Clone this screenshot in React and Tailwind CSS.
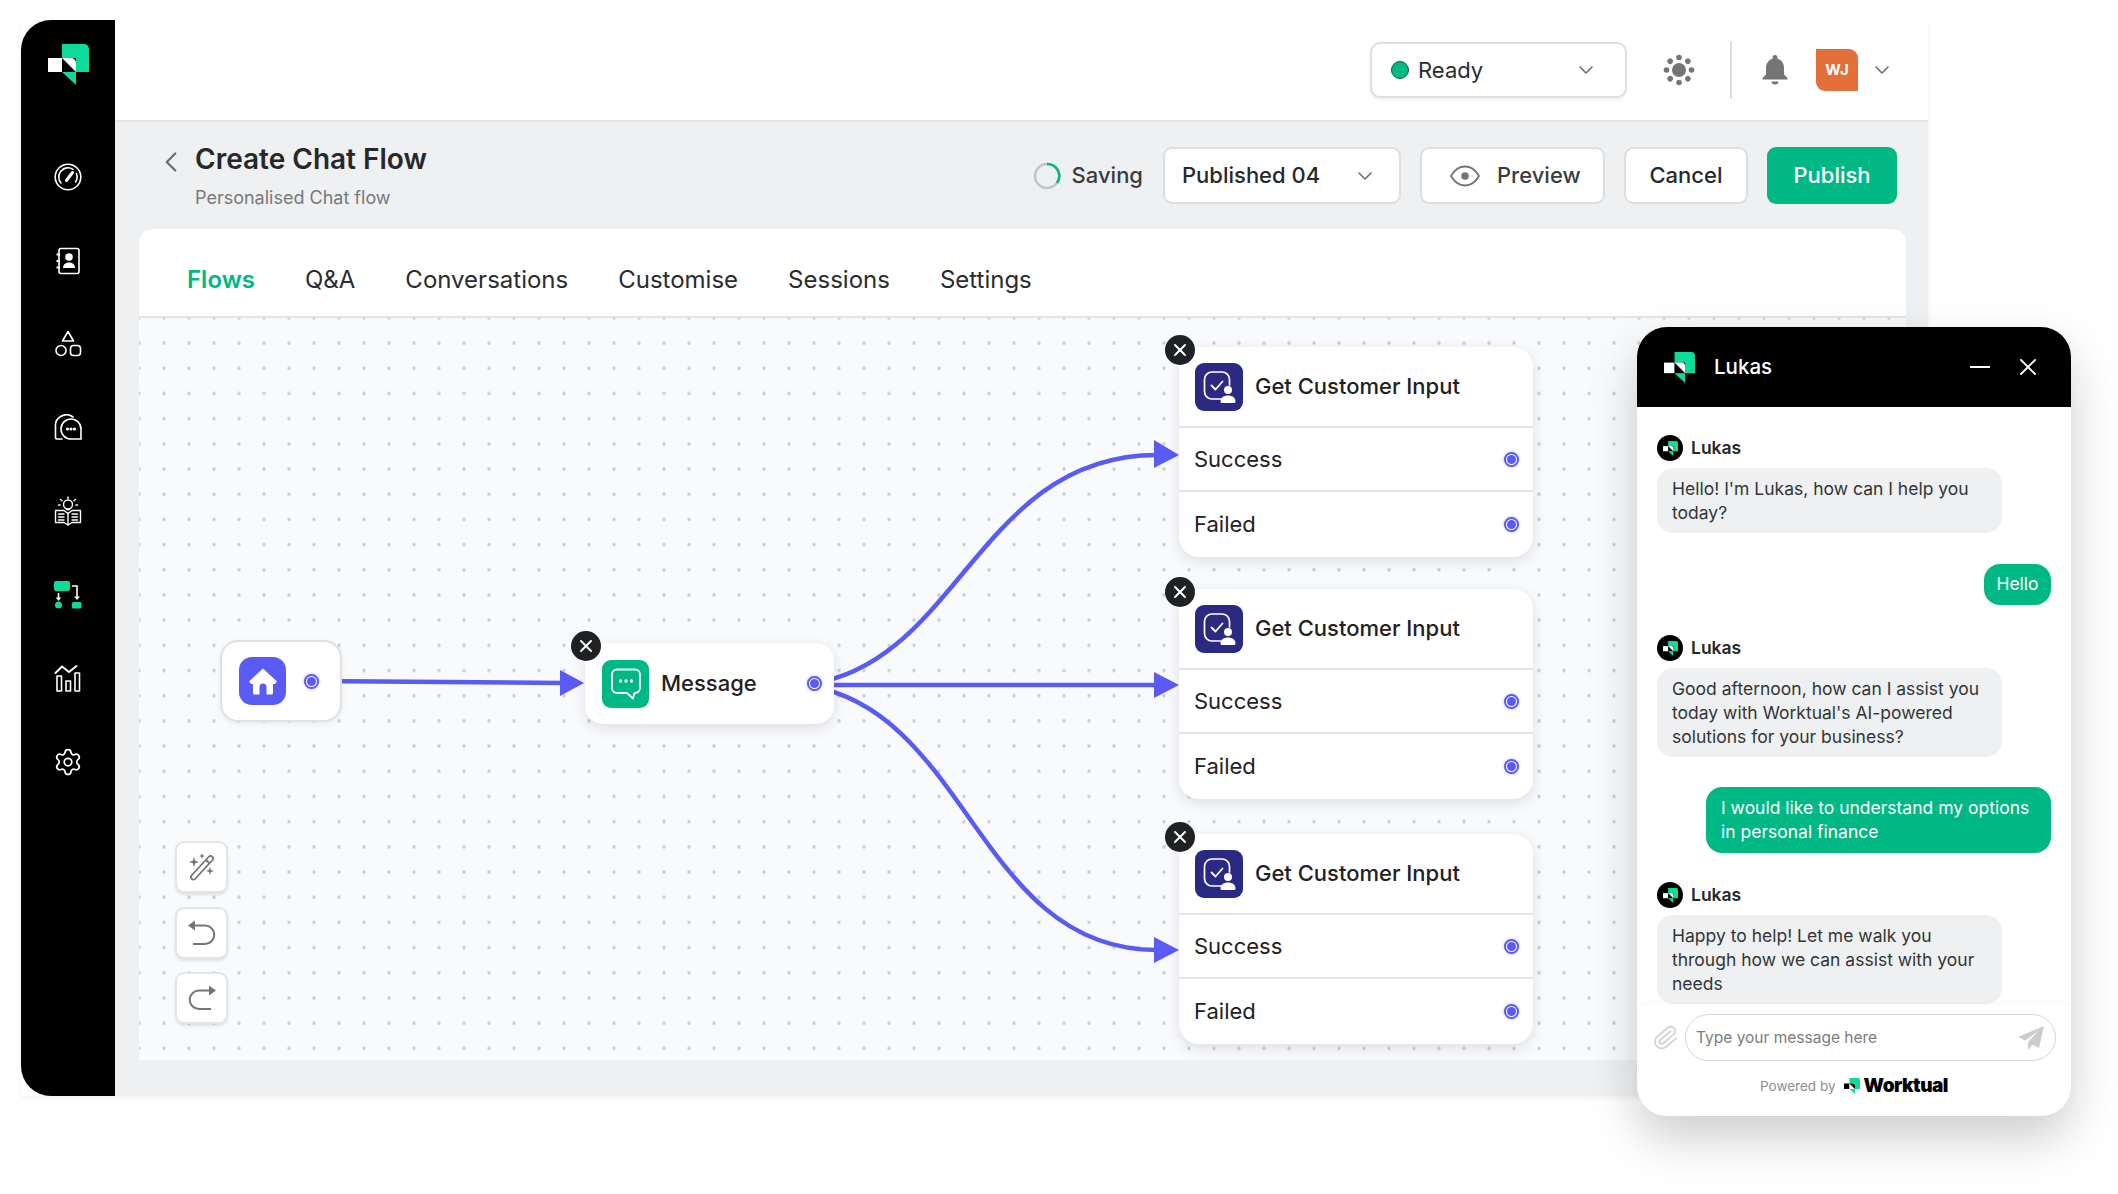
import React from "react";
import { ChevronDown, ChevronLeft, Paperclip, Settings, X } from "lucide-react";

const Logo = ({ size = 41, fg = "#ffffff", bg = "#000000", accent = "#0cdb9b" }) => (
	<svg width={size} height={size} viewBox="0 0 41 41">
		<path d="M14 0H36a5 5 0 0 1 5 5V28H14Z" fill={accent} />
		<rect x="0" y="14" width="14" height="14" fill={fg} />
		<rect x="14" y="14" width="14" height="14" fill={bg} />
		<path d="M14 14H23a5 5 0 0 1 5 5V28Z" fill={fg} />
		<path d="M14 28H28V41Z" fill={accent} />
	</svg>
);

const GaugeIcon = () => (
	<svg width="28" height="28" viewBox="0 0 28 28" fill="none" stroke="#fff" strokeWidth="1.6" strokeLinecap="round">
		<circle cx="14" cy="14" r="12.8" />
		<path d="M7 20A9.2 9.2 0 0 1 19 6.3" />
		<path d="M22.4 10.5A9.2 9.2 0 0 1 21.5 19" />
		<path d="M12.4 17.5L18.5 9.5" strokeWidth="3" />
	</svg>
);

const ContactIcon = () => (
	<svg width="28" height="28" viewBox="0 0 28 28" fill="none" stroke="#fff" strokeWidth="1.6">
		<rect x="5" y="1.5" width="20" height="25" rx="2" />
		<path d="M2.5 7.5H6M2.5 14H6M2.5 20.5H6" strokeWidth="2" />
		<circle cx="15" cy="10" r="3.8" fill="#fff" stroke="none" />
		<path d="M9 21c0-3.8 3-5.5 6-5.5s6 1.7 6 5.5z" fill="#fff" stroke="none" />
	</svg>
);

const ShapesIcon = () => (
	<svg width="28" height="28" viewBox="0 0 28 28" fill="none" stroke="#fff" strokeWidth="1.6" strokeLinejoin="round">
		<path d="M14 1.5L19.5 11H8.5Z" />
		<circle cx="7" cy="20.5" r="5" />
		<rect x="16.5" y="15.5" width="10" height="10" rx="3" />
	</svg>
);

const ChatsIcon = () => (
	<svg width="28" height="28" viewBox="0 0 28 28" fill="none" stroke="#fff" strokeWidth="1.6" strokeLinecap="round">
		<path d="M27 25V15A10 10 0 1 0 17 25Z" />
		<path d="M8 25H3a1.5 1.5 0 0 1-1.500-1.500V13A11 11 0 0 1 19 3" />
		<circle cx="13.500" cy="15" r="0.8" fill="#fff" />
		<circle cx="17" cy="15" r="0.8" fill="#fff" />
		<circle cx="20.500" cy="15" r="0.8" fill="#fff" />
	</svg>
);

const BookIcon = () => (
	<svg width="28" height="30" viewBox="0 0 28 30" fill="none" stroke="#fff" strokeWidth="1.4" strokeLinecap="round" strokeLinejoin="round">
		<circle cx="14" cy="8.500" r="4.500" />
		<path d="M12.500 13.500h3M14 1v1.500M6.500 3.500l1.500 1.200M21.500 3.500L20 4.700M4.500 9H6M22 9h1.500" />
		<path d="M14 17.500L10 14.500H1.500V26.500H10L14 29L18 26.500H26.500V14.500H18Z" />
		<path d="M14 17.500V29M4.500 18H10M4.500 21H10M4.500 24H10M18 18H23.500M18 21H23.500M18 24H23.500" />
	</svg>
);

const FlowIcon = () => (
	<svg width="28" height="28" viewBox="0 0 28 28" fill="none">
		<rect x="0" y="0" width="16" height="10" rx="2" fill="#0cdb9b" />
		<circle cx="4.500" cy="24" r="3.500" fill="#0cdb9b" />
		<rect x="18" y="21" width="9.500" height="6.500" rx="1.500" fill="#0cdb9b" />
		<path d="M4.500 12V18" stroke="#fff" strokeWidth="1.600" />
		<path d="M1.800 16.500L4.500 20L7.200 16.500Z" fill="#fff" />
		<path d="M18 5H23V17" stroke="#fff" strokeWidth="1.600" />
		<path d="M20 15.500L23 19L26 15.500Z" fill="#fff" />
	</svg>
);

const ChartIcon = () => (
	<svg width="28" height="28" viewBox="0 0 28 28" fill="none" stroke="#fff" strokeWidth="1.6" strokeLinecap="round" strokeLinejoin="round">
		<path d="M1.500 9L8 2.500L15 8L22.500 2" strokeWidth="1.900" />
		<rect x="3" y="12" width="4.500" height="15" />
		<rect x="12" y="17" width="4.500" height="10" />
		<rect x="21" y="9" width="4.500" height="18" />
	</svg>
);

const SunDots = () => (
	<svg width="32" height="32" viewBox="0 0 32 32" fill="#757575">
		<circle cx="16" cy="16" r="7" />
		{[0, 45, 90, 135, 180, 225, 270, 315].map((a) => (
			<circle key={a} cx="16" cy="3.500" r="2.800" transform={`rotate(${a} 16 16)`} />
		))}
	</svg>
);

const BellIcon = () => (
	<svg width="28" height="32" viewBox="0 0 28 32" fill="#757575">
		<path d="M14 1a2.500 2.500 0 0 0-2.500 2.500v1.200C7 6 5 10 5 14v6.500L1.500 24v1.500h25V24L23 20.500V14c0-4-2-8-6.500-9.300V3.500A2.500 2.500 0 0 0 14 1z" />
		<path d="M10.500 27.500a3.500 3 0 0 0 7 0z" />
	</svg>
);

const EyeIcon = () => (
	<svg width="30" height="22" viewBox="0 0 30 22" fill="none" stroke="#757575" strokeWidth="1.800">
		<path d="M1 11C5 4 10 1.500 15 1.500S25 4 29 11C25 18 20 20.500 15 20.500S5 18 1 11Z" />
		<circle cx="15" cy="11" r="3.800" fill="#757575" stroke="none" />
	</svg>
);

const HomeGlyph = () => (
	<svg width="30" height="30" viewBox="0 0 30 30" fill="#fff">
		<path d="M15 2.500L29 15.500L27 18H25V27a1.500 1.500 0 0 1-1.500 1.500H18.500V21a3.500 3.500 0 0 0-7 0V28.500H6.500A1.500 1.500 0 0 1 5 27V18H3L1 15.500Z" />
	</svg>
);

const MessageGlyph = () => (
	<svg width="32" height="34" viewBox="0 0 32 34" fill="none" stroke="#fff" strokeWidth="1.800" strokeLinejoin="round">
		<path d="M7 2.500H25a5 5 0 0 1 5 5V21a5 5 0 0 1-5 5H24.500L23 31.500L17 26H7a5 5 0 0 1-5-5V7.500a5 5 0 0 1 5-5Z" />
		<circle cx="10.500" cy="14" r="1.700" fill="#fff" stroke="none" />
		<circle cx="16" cy="14" r="1.700" fill="#fff" stroke="none" />
		<circle cx="21.500" cy="14" r="1.700" fill="#fff" stroke="none" />
	</svg>
);

const CustomerGlyph = () => (
	<svg width="34" height="34" viewBox="0 0 34 34" fill="none">
		<path d="M19 29H10a7.500 7.500 0 0 1-7.500-7.500V9.500A7.500 7.500 0 0 1 10 2H20a7.500 7.500 0 0 1 7.500 7.500V15" stroke="#fff" strokeWidth="1.700" strokeLinecap="round" />
		<path d="M9.500 15.500L13.500 19.500L20.500 11.500" stroke="#fff" strokeWidth="1.800" strokeLinecap="round" strokeLinejoin="round" />
		<circle cx="26" cy="20" r="4" fill="#fff" />
		<path d="M18.500 31.500c0-4 3.500-6 7.500-6s7.500 2 7.500 6c0 1-1 1.500-2 1.500h-11c-1 0-2-.5-2-1.500z" fill="#fff" />
	</svg>
);

const WandIcon = () => (
	<svg width="30" height="30" viewBox="0 0 30 30" fill="none" stroke="#757575" strokeWidth="1.800">
		<path d="M4.500 23.500L22 4.500a2 2 0 0 1 3 0l.5.500a2 2 0 0 1 0 3L8 27a2 2 0 0 1-3 0l-.5-.500a2 2 0 0 1 0-3Z" strokeLinejoin="round" />
		<path d="M19 8L22.500 11.500" />
		<path d="M7 5L8.200 8.800L12 10L8.200 11.200L7 15L5.800 11.200L2 10L5.800 8.800Z" fill="#757575" stroke="none" />
		<path d="M15 1L15.800 3.200L18 4L15.800 4.800L15 7L14.200 4.800L12 4L14.200 3.200Z" fill="#757575" stroke="none" />
		<path d="M23 15L24 18L27 19L24 20L23 23L22 20L19 19L22 18Z" fill="#757575" stroke="none" />
	</svg>
);

const UndoIcon = () => (
	<svg width="30" height="30" viewBox="0 0 30 30" fill="none" stroke="#757575" strokeWidth="2">
		<path d="M6 7.500H18a9 9 0 0 1 0 18.500H6" />
		<path d="M1 7.500L8 2.500V12.500Z" fill="#757575" stroke="none" />
	</svg>
);

const RedoIcon = () => (
	<svg width="30" height="30" viewBox="0 0 30 30" fill="none" stroke="#757575" strokeWidth="2">
		<path d="M24 7.500H12a9 9 0 0 0 0 18.500H24" />
		<path d="M29 7.500L22 2.500V12.500Z" fill="#757575" stroke="none" />
	</svg>
);

const SendIcon = () => (
	<svg width="26" height="24" viewBox="0 0 26 24" fill="#cccccc">
		<path d="M26 0L0 11L7 14.500L20 5L10 16.500V24L14.500 18.500L21 22Z" />
	</svg>
);

const sideIcons = [
	<GaugeIcon key="gauge" />,
	<ContactIcon key="contacts" />,
	<ShapesIcon key="shapes" />,
	<ChatsIcon key="chats" />,
	<BookIcon key="book" />,
	<FlowIcon key="flow" />,
	<ChartIcon key="chart" />,
	<Settings key="settings" size={30} color="#ffffff" strokeWidth={1.4} />,
];

const tabs = ["Q&A", "Conversations", "Customise", "Sessions", "Settings"];

const RemoveBadge = ({ className }) => (
	<div className={`absolute flex h-[30px] w-[30px] items-center justify-center rounded-full bg-[#1f2123] ${className}`}>
		<X size={20} color="#ffffff" strokeWidth={2.4} />
	</div>
);

const Port = ({ className = "" }) => (
	<div className={`flex h-[15px] w-[15px] items-center justify-center rounded-full border-2 border-[#5a5af5] bg-white shadow-[0_0_3px_#a9a9ff] ${className}`}>
		<div className="h-[9px] w-[9px] rounded-full bg-[#5a5af5]" />
	</div>
);

const CustomerNode = ({ top }) => (
	<div className={`absolute left-[1040px] h-[210px] w-[354px] rounded-[20px] bg-white shadow-[0_4px_14px_rgba(30,40,60,0.13)] ${top}`}>
		<RemoveBadge className="-left-[14px] -top-[12px]" />
		<div className="flex h-[81px] items-center gap-[12px] border-b-2 border-[#e2e4e6] pl-[16px]">
			<div className="flex h-[48px] w-[48px] items-center justify-center rounded-[9px] bg-[#2b2a82]">
				<CustomerGlyph />
			</div>
			<span className="text-[22px] font-medium text-[#1f2123]">Get Customer Input</span>
		</div>
		<div className="flex h-[64px] items-center justify-between border-b-2 border-[#e2e4e6] pl-[15px] pr-[14px]">
			<span className="text-[22px] text-[#1f2123]">Success</span>
			<Port />
		</div>
		<div className="flex h-[64px] items-center justify-between pl-[15px] pr-[14px]">
			<span className="text-[22px] text-[#1f2123]">Failed</span>
			<Port />
		</div>
	</div>
);

const ToolButton = ({ children }) => (
	<div className="flex h-[52px] w-[53px] items-center justify-center rounded-[9px] border-2 border-[#e4e5e7] bg-white shadow-[0_2px_3px_rgba(0,0,0,0.1)]">
		{children}
	</div>
);

const AgentName = () => (
	<div className="flex h-[26px] items-center gap-[8px]">
		<div className="flex h-[26px] w-[26px] items-center justify-center rounded-full bg-black">
			<Logo size={15} />
		</div>
		<span className="text-[17.5px] font-semibold text-[#26282a]">Lukas</span>
	</div>
);

const AgentBubble = ({ children }) => (
	<div className="mt-[7px] w-[345px] rounded-[16px] bg-[#eef0f2] px-[15px] py-[8.5px] text-[17.5px] leading-[24px] text-[#333537]">
		{children}
	</div>
);

const Edges = () => (
	<svg className="absolute left-0 top-0" width="1767" height="742" viewBox="0 0 1767 742" fill="none">
		<g stroke="#5a5af5" strokeWidth="4.500">
			<path d="M172 363L424 365" />
			<path d="M671 366C820 345 840 137 1018 137" />
			<path d="M671 367H1018" />
			<path d="M671 368C830 395 840 632 1018 632" />
		</g>
		<g fill="#5a5af5">
			<path d="M421 352L445 365L421 378Z" />
			<path d="M1015 122L1040 137L1015 150Z" />
			<path d="M1015 354L1040 367L1015 380Z" />
			<path d="M1015 619L1040 632L1015 645Z" />
		</g>
	</svg>
);

const App = () => {
	return (
		<div className="relative h-[1194px] w-[2118px] overflow-hidden bg-white pl-[21px] pt-[20px] font-[Inter,sans-serif]">
			{/* App frame */}
			<div className="flex h-[1076px] w-[1907px] shadow-[0_2px_6px_rgba(0,0,0,0.06)]">
				<aside className="flex w-[94px] flex-col items-center rounded-l-[30px] bg-black pt-[24px]">
					<Logo />
					<div className="mt-[78px] flex flex-col items-center gap-[55.5px]">
						{sideIcons.map((icon, i) => (
							<div key={i} className="flex h-[28px] w-[30px] items-center justify-center">
								{icon}
							</div>
						))}
					</div>
				</aside>

				<main className="flex flex-1 flex-col bg-[#eef0f2]">
					{/* Top bar */}
					<header className="flex h-[102px] items-center justify-end border-b-2 border-[#e2e4e6] bg-white pr-[34px]">
						<div className="flex h-[56px] w-[257px] items-center justify-between rounded-[10px] border-2 border-[#dcdee0] pl-[19px] pr-[27px] shadow-[0_2px_3px_rgba(0,0,0,0.06)]">
							<div className="flex items-center gap-[9px]">
								<div className="h-[18px] w-[18px] rounded-full border border-[#0b5d46] bg-[#00b884]" />
								<span className="text-[22px] text-[#2a2c2e]">Ready</span>
							</div>
							<ChevronDown size={24} color="#6b6e70" strokeWidth={1.6} />
						</div>
						<div className="ml-[36px]">
							<SunDots />
						</div>
						<div className="ml-[35px] h-[58px] w-[2px] bg-[#dcdee0]" />
						<div className="ml-[29px]">
							<BellIcon />
						</div>
						<div className="ml-[27px] flex h-[42px] w-[42px] items-center justify-center rounded-bl-[9px] rounded-tr-[9px] bg-[#e36f3b] text-[15px] font-bold text-white">
							WJ
						</div>
						<div className="ml-[12px]">
							<ChevronDown size={24} color="#6b6e70" strokeWidth={1.6} />
						</div>
					</header>

					{/* Page heading */}
					<div className="flex h-[107px] items-start justify-between pl-[39px] pr-[31px] pt-[25px]">
						<div className="flex">
							<ChevronLeft className="mt-[-2px]" size={34} color="#6b6e70" strokeWidth={1.6} />
							<div className="ml-[7px]">
								<h1 className="text-[28px] font-semibold leading-[24px] text-[#26282a]">Create Chat Flow</h1>
								<p className="mt-[16px] text-[18px] leading-[22px] text-[#77797b]">Personalised Chat flow</p>
							</div>
						</div>
						<div className="flex items-center">
							<svg width="28" height="28" viewBox="0 0 28 28" fill="none" strokeWidth="2.500">
								<circle cx="14" cy="14" r="12" stroke="#c2c4c6" />
								<path d="M14 2A12 12 0 0 1 24 21" stroke="#00b884" />
							</svg>
							<span className="ml-[11px] text-[22px] font-medium text-[#3a3c3e]">Saving</span>
							<div className="ml-[20px] flex h-[57px] w-[238px] items-center justify-between rounded-[9px] border-2 border-[#dcdee0] bg-white pl-[17px] pr-[22px]">
								<span className="text-[22px] font-medium text-[#26282a]">Published 04</span>
								<ChevronDown size={24} color="#6b6e70" strokeWidth={1.6} />
							</div>
							<div className="ml-[19px] flex h-[57px] w-[185px] items-center gap-[17px] rounded-[9px] border-2 border-[#dcdee0] bg-white pl-[28px]">
								<EyeIcon />
								<span className="text-[22px] font-medium text-[#3a3c3e]">Preview</span>
							</div>
							<div className="ml-[19px] flex h-[57px] w-[124px] items-center justify-center rounded-[9px] border-2 border-[#dcdee0] bg-white text-[22px] font-medium text-[#26282a]">
								Cancel
							</div>
							<div className="ml-[19px] flex h-[57px] w-[130px] items-center justify-center rounded-[9px] bg-[#00b884] text-[22px] font-medium text-white">
								Publish
							</div>
						</div>
					</div>

					{/* Builder card */}
					<div className="ml-[24px] mr-[22px] flex h-[831px] flex-col">
						<nav className="flex h-[89px] flex-none items-center gap-[50px] rounded-t-[14px] border-b-2 border-[#e2e4e6] bg-white pl-[48px] pt-[14px] text-[24px] text-[#2a2c2e]">
							<div className="relative font-semibold text-[#00b884]">
								Flows
								<div className="absolute -bottom-[24px] -left-[24px] -right-[25px] h-[3px] bg-[#00b884]" />
							</div>
							{tabs.map((tab) => (
								<span key={tab}>{tab}</span>
							))}
						</nav>

						{/* Canvas */}
						<div className="relative flex-1 bg-[#f9fafc] bg-[radial-gradient(circle,#c8cbcf_1.4px,transparent_2px)] bg-[size:25px_25.2px] bg-[position:-12.5px_12.5px]">
							<Edges />

							<div className="absolute left-[81px] top-[322px] flex h-[82px] w-[122px] items-center rounded-[18px] border-2 border-[#dfe1e3] bg-white pl-[17px] shadow-[0_2px_6px_rgba(0,0,0,0.06)]">
								<div className="flex h-[48px] w-[47px] items-center justify-center rounded-[13px] bg-[#5a5af5]">
									<HomeGlyph />
								</div>
								<Port className="ml-[18px]" />
							</div>

							<div className="absolute left-[446px] top-[325px] flex h-[81px] w-[249px] items-center rounded-[18px] bg-white pl-[17px] shadow-[0_4px_14px_rgba(30,40,60,0.13)]">
								<RemoveBadge className="-left-[14px] -top-[12px]" />
								<div className="flex h-[48px] w-[47px] items-center justify-center rounded-[9px] bg-[#00b884]">
									<MessageGlyph />
								</div>
								<span className="ml-[12px] text-[22px] font-medium text-[#1f2123]">Message</span>
								<Port className="ml-[50px]" />
							</div>

							<CustomerNode top="top-[29px]" />
							<CustomerNode top="top-[271px]" />
							<CustomerNode top="top-[516px]" />

							<div className="absolute left-[36px] top-[523px] flex flex-col gap-[13.5px]">
								<ToolButton>
									<WandIcon />
								</ToolButton>
								<ToolButton>
									<UndoIcon />
								</ToolButton>
								<ToolButton>
									<RedoIcon />
								</ToolButton>
							</div>
						</div>
					</div>
				</main>
			</div>

			{/* Chat widget */}
			<div className="absolute left-[1637px] top-[327px] flex h-[789px] w-[434px] flex-col overflow-hidden rounded-[30px] bg-white shadow-[0_22px_50px_rgba(0,0,0,0.2)]">
				<div className="flex h-[80px] flex-none items-center bg-black pl-[27px] pr-[29px]">
					<Logo size={31} />
					<span className="ml-[19px] text-[20.5px] font-medium text-white">Lukas</span>
					<div className="ml-auto h-[2px] w-[20px] bg-white" />
					<X className="ml-[24px]" size={28} color="#ffffff" strokeWidth={1.6} />
				</div>

				<div className="flex-1 px-[20px] pt-[28px]">
					<AgentName />
					<AgentBubble>Hello! I'm Lukas, how can I help you today?</AgentBubble>
					<div className="mt-[31px] flex justify-end">
						<div className="flex h-[41px] w-[67px] items-center justify-center rounded-[16px] bg-[#00b884] text-[17.5px] text-white">Hello</div>
					</div>
					<div className="mt-[30px]">
						<AgentName />
					</div>
					<AgentBubble>Good afternoon, how can I assist you today with Worktual's AI-powered solutions for your business?</AgentBubble>
					<div className="mt-[30px] flex justify-end">
						<div className="w-[345px] rounded-[16px] bg-[#00b884] px-[15px] py-[9px] text-[17.5px] leading-[24px] text-white">
							I would like to understand my options in personal finance
						</div>
					</div>
					<div className="mt-[29px]">
						<AgentName />
					</div>
					<AgentBubble>Happy to help! Let me walk you through how we can assist with your needs</AgentBubble>
				</div>

				<div className="flex h-[111px] flex-none flex-col shadow-[0_-3px_4px_rgba(0,0,0,0.02)]">
					<div className="mt-[9px] flex h-[47px] items-center pl-[15px] pr-[15px]">
						<Paperclip className="rotate-[5deg]" size={27} color="#d2d2d2" strokeWidth={1.6} />
						<div className="ml-[6px] flex h-[47px] flex-1 items-center justify-between rounded-full border border-[#d4d6d8] pl-[10px] pr-[11px]">
							<span className="text-[15.5px] text-[#7a7c7e]">Type your message here</span>
							<SendIcon />
						</div>
					</div>
					<div className="mt-[11px] flex items-center justify-center">
						<span className="text-[13.5px] text-[#8a8c8e]">Powered by</span>
						<div className="ml-[8px]">
							<Logo size={16} fg="#000000" bg="#ffffff" />
						</div>
						<span className="ml-[4px] text-[19px] font-black tracking-[-0.5px] text-black">Worktual</span>
					</div>
				</div>
			</div>
		</div>
	);
};

export default App;
